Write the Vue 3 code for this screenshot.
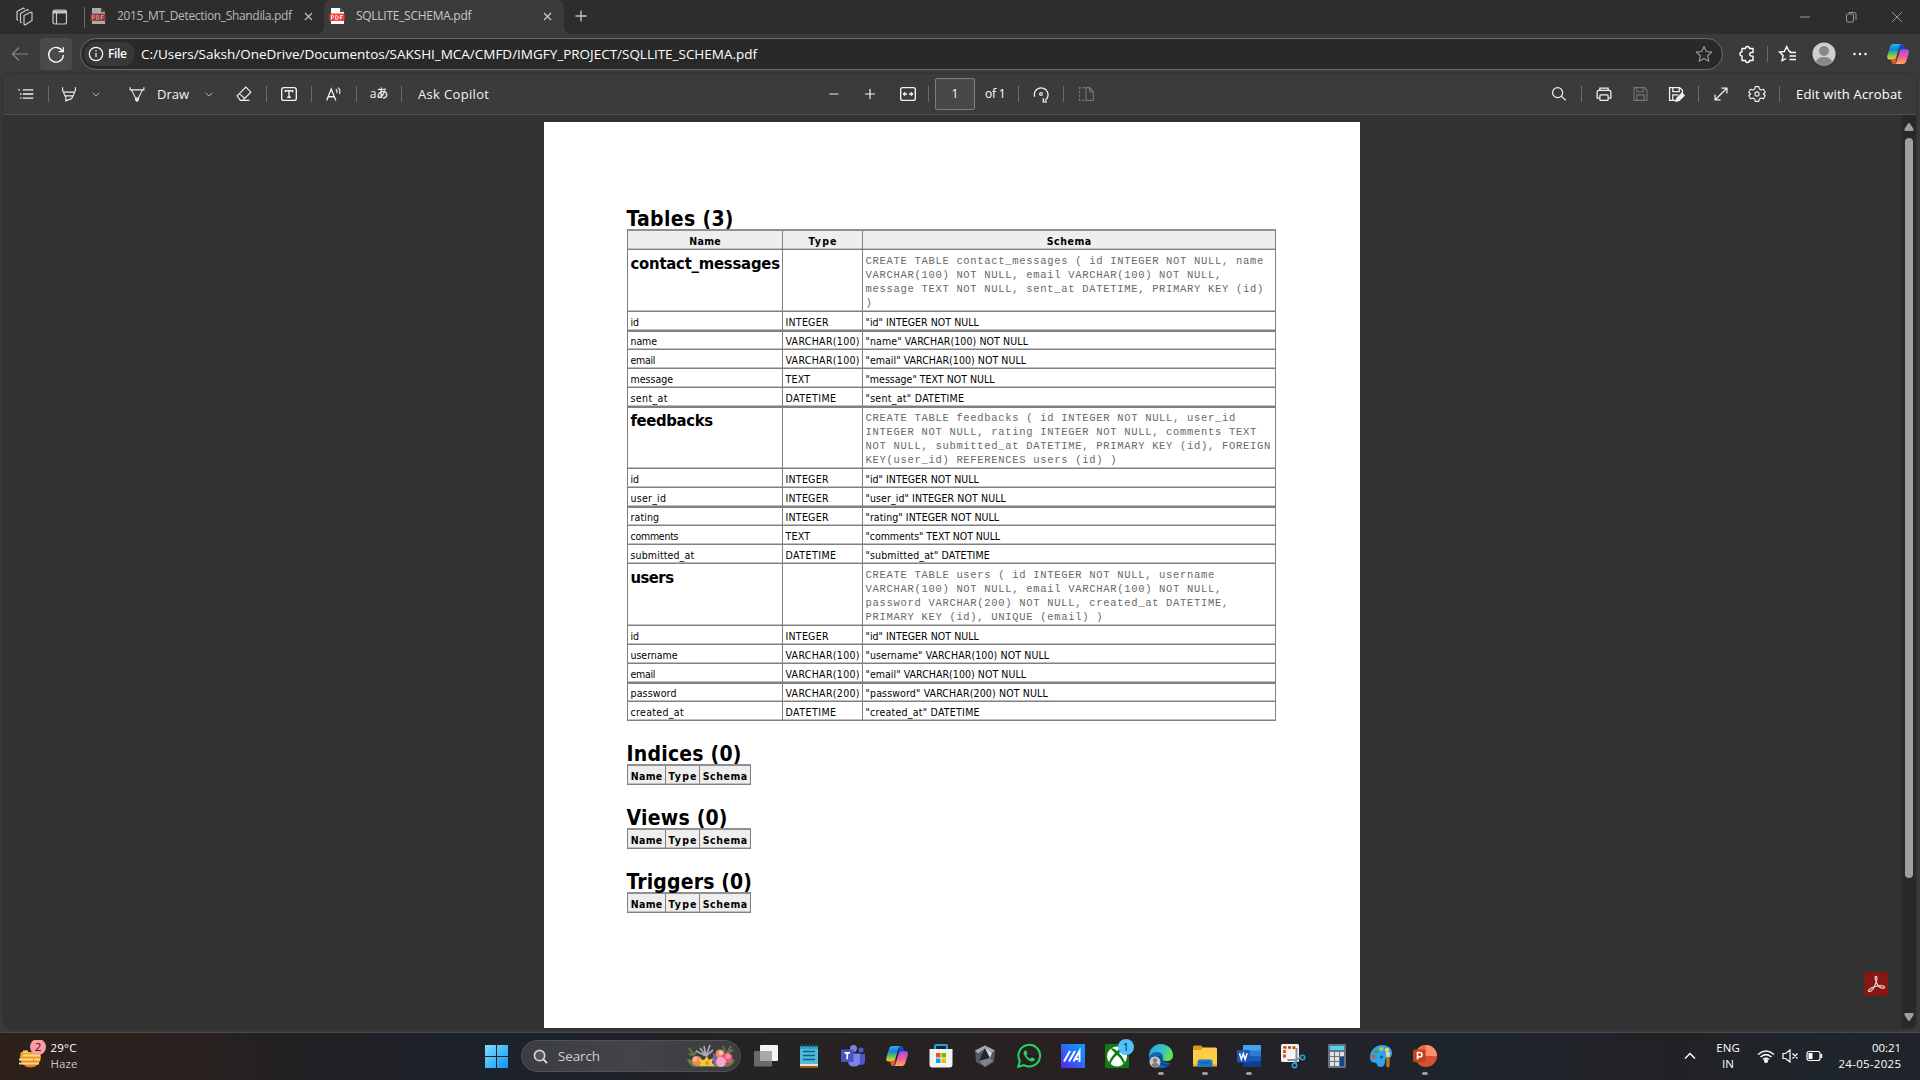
<script setup>
// Letter-spacing is tuned so each label occupies its design width.
const vFit = {
  mounted(el, { value }) {
    if (!value) return
    const natural = el.getBoundingClientRect().width
    const step = (value - natural) / Math.max(1, el.textContent.length - 1)
    el.style.letterSpacing = step.toFixed(3) + 'px'
    el.style.marginRight = (-step).toFixed(3) + 'px'
  },
}

const copilot = `<defs><linearGradient id="cpa" x1="0" y1="0" x2="0" y2="1"><stop offset="0" stop-color="#27b3f5"/><stop offset=".35" stop-color="#1583dc"/><stop offset=".65" stop-color="#5fbf60"/><stop offset="1" stop-color="#ffd21c"/></linearGradient><linearGradient id="cpb" x1="0" y1="0" x2="0" y2="1"><stop offset="0" stop-color="#9a52ee"/><stop offset=".5" stop-color="#f0589b"/><stop offset="1" stop-color="#ffab5a"/></linearGradient></defs><path d="M14 2h2c1.800 0 2.300 1.500 3 4l.5 1.500h-3c-1.800 0-2.500 1-3 2.500z" fill="#1b44c8"/><path d="M7.500 2H16c-1.500 0-2.200 1.200-2.700 3l-2.800 9.500c-.6 2-1.500 3-3.300 3H4c-2.500 0-3.300-1.500-2.600-4L4 5c.6-2 1.600-3 3.500-3z" fill="url(#cpa)"/><path d="M8 22c1.700 0 2.300-1.200 2.800-3l2.700-9c.6-2 1.500-2.800 3.300-2.800h3.400c2.400 0 3.200 1.500 2.500 4L20.300 19c-.7 2-1.700 3-3.600 3z" fill="url(#cpb)"/><path d="M5 17.500h3c1.500 0 2.500-1 3.200-2.500L10 19c-.6 2-1.200 3-2.600 3C5.800 22 5.800 19.500 5 17.500z" fill="#f4572c"/>`

const icons = {
  workspaces: `<path d="M12 11.500l7-3.500 1 .8v7.700L13 21l-1-.8zM9.500 19l-1-1V9.500l7-4 1 1M6 16.500l-1-1V7.500L11.500 4l1 1" stroke-linejoin="round"/>`,
  tabs: `<rect x="5" y="5" width="13.500" height="14" rx="2"/><path d="M5 7h13.500" stroke-width="3"/><path d="M8.500 8v11"/>`,
  back: `<path d="M20 12H4.500M11 5.500L4.500 12l6.500 6.500"/>`,
  reload: `<path d="M19 9a8 8 0 1 0 1 4M20 4.500V9.500h-5" stroke-width="1.400"/>`,
  info: `<circle cx="12" cy="12" r="6.700"/><path d="M12 11v4"/><path d="M12 8.200v1.300" stroke-width="1.400"/>`,
  list: `<path d="M8.500 7.500H20M8.500 12H20M8.500 16.500H20M3.500 7.500h2M5.500 12h1.500M5.500 16.500h1.500" stroke-width="1.500"/>`,
  highlighter: `<path d="M5 4.500v3.500l1 2h12l1-2V4.500M6 10l1.500 4h9L18 10M8.500 14v5.500l6.500-2.500 1-3"/>`,
  chevron: `<path d="M8 10.500l4 4 4-4"/>`,
  pen: `<path d="M4.500 4.500v3h15v-3M6 7.500l6 12 6-12M10.500 16.500h3v2l-1.500 1.500-1.500-1.500z"/>`,
  eraser: `<path d="M4.500 14L14 4.500l5.500 5.500-9 9H8zM7 11.500l6 5.500M10 19h8"/>`,
  textbox: `<rect x="4" y="5" width="16" height="14" rx="2.500" stroke-width="1.500"/><path d="M8 10V8.500h8V10M12 8.500v7M10 15.500h4" stroke-width="1.500"/>`,
  read: `<path d="M4 19L9 6.500 14 19M6 15h6.500" stroke-width="1.400"/><path d="M14 6.500q2 2 1 4.500M16.500 5q3 3 1.500 7"/>`,
  minus: `<path d="M7 12h10" stroke-width="1.600"/>`,
  plus: `<path d="M6.500 12h11M12 6.500v11" stroke-width="1.300"/>`,
  fit: `<rect x="4" y="5" width="16" height="14" rx="2" stroke-width="1.500"/><path d="M7 12h4M13 12h4" stroke-width="1.600"/><path d="M9 9.300v5.400L6 12zM15 9.300v5.400l3-2.700z" fill="currentColor" stroke="none"/>`,
  rotate: `<path d="M5 15a7.500 7.500 0 1 1 11.500 4" stroke-width="1.400"/><path d="M14.500 16.500v4h4" stroke-width="1.400"/><circle cx="12" cy="12" r="1.500"/>`,
  pages: `<path d="M11 5H5v14h6" stroke-dasharray="3 1.500"/><path d="M12 5h4l4 4.500V19h-8zM16 5v4.500h4"/>`,
  search: `<circle cx="10.500" cy="10.500" r="5.500" stroke-width="1.300"/><path d="M14.500 14.500L19.500 19" stroke-width="1.300"/>`,
  print: `<path d="M7.500 8V5.500h9V8M7 16.500H4.500V10q0-2 2-2h11q2 0 2 2v6.500H17" stroke-width="1.400"/><rect x="7.500" y="13" width="9" height="6" rx="1" stroke-width="1.400"/>`,
  save: `<path d="M5.500 5h11l3 3v11h-14zM8.500 5v4.500h7V5M8.500 19v-6h8v6"/>`,
  saveas: `<path d="M12 19H5V5h11l3 3v4M8.500 5v4.500h7V5M8.500 19v-6h6" stroke-width="1.400"/><path d="M12 20l1-3.500 5.500-5.500 2.500 2.500-5.500 5.500z" fill="currentColor"/>`,
  expand: `<path d="M5.500 18.500l13-13M12.500 5.500h6v6M5.500 12.500v6h6" stroke-width="1.300"/>`,
  gear: `<path d="M10 4h4l.6 2.600 1.800 1 2.600-.8 2 3.300-2 1.900 2 1.900-2 3.300-2.600-.8-1.800 1L14 20h-4l-.6-2.600-1.800-1-2.600.8-2-3.300L5 12 3 10.100l2-3.300 2.600.8 1.800-1z" stroke-linejoin="round"/><circle cx="12" cy="12" r="2.300"/>`,
  star: `<path d="M12 4.500l2.300 5 5.400.6-4 3.700 1.100 5.400L12 16.500l-4.800 2.700 1.100-5.400-4-3.700 5.400-.6z" stroke-linejoin="round"/>`,
  puzzle: `<path d="M8 6.500h2.500a2 2 0 0 1 4 0H18v4h-1.500a1.800 1.800 0 0 0 0 3.600H18v4.400h-3.500a2 2 0 0 1-4 0H7v-4.500a2 2 0 0 1 0-4V6.500z" stroke-width="1.400" stroke-linejoin="round"/>`,
  favs: `<path d="M15 9.500l-2-.3-2.300-4.700-2.400 5-4.800.6 3.600 3.500-1 5.100 4-2.200M13.500 10.500H20M13.500 14H20M13.500 17.500H20" stroke-width="1.400"/>`,
  dots: `<g fill="currentColor" stroke="none"><circle cx="6.500" cy="12" r="1.200"/><circle cx="12" cy="12" r="1.200"/><circle cx="17.500" cy="12" r="1.200"/></g>`,
  avatar: `<g stroke="none"><circle cx="12" cy="12" r="11.500" fill="#d2d0ce"/><circle cx="12" cy="9" r="5" fill="#8a8886"/><path d="M4 20q1-5 8-5t8 5a11.500 11.500 0 0 1-16 0z" fill="#8a8886"/></g>`,
  copilot,
  min: `<path d="M7 12h10"/>`,
  restore: `<rect x="7.500" y="9" width="7" height="8" rx="1"/><path d="M9.500 7.500h5.500q2 0 2 2V15"/>`,
  close: `<path d="M7 7l10 10M17 7L7 17"/>`,
  pdf: `<g stroke="none"><path d="M6 4h9l4 4v12H6z" fill="#fff"/><path d="M15 4l4 4h-4z" fill="#444"/><rect x="4.500" y="9.500" width="15" height="7.500" rx="1" fill="#f43e3e"/></g><path d="M6.500 15.500v-4h1.200q1 0 1 1.100t-1 1.100h-1M10.700 11.500v4h.8q1.600 0 1.600-2t-1.600-2zM15.300 15.500v-4h2.400M15.300 13.500h2" stroke="#fff" stroke-width=".9"/>`,
  wifi: `<path d="M4 10.500q8-7 16 0M6.500 13q5.500-4.800 11 0M9 15.500q3-2.500 6 0" stroke-width="1.500"/><circle cx="12" cy="17" r="1.400" fill="currentColor"/>`,
  mute: `<path d="M5 9.500h2.500L12 6v12l-4.500-3.500H5zM14.500 9.500l5 5M19.500 9.500l-5 5" stroke-width="1.200"/>`,
  battery: `<rect x="5" y="7.500" width="13" height="9" rx="2" stroke-width="1.200"/><path d="M6.500 9h4v6h-4zM18.500 10h1.700v4h-1.700z" fill="currentColor" stroke="none"/>`,
  caret: `<path d="M7 14.500l5-5 5 5" stroke-width="1.500"/>`,
}

const leftTools = [
  { icon: 'list', w: 42, after: 1, sep: true },
  { icon: 'highlighter', w: 40, after: 1 },
  { icon: 'chevron', w: 11, dim: true, after: 18 },
  { icon: 'pen', w: 36 },
  { text: 'Draw', w: 48, fit: 32, pad: 2 },
  { icon: 'chevron', w: 12, dim: true, after: 8 },
  { icon: 'eraser', w: 41, after: 2, sep: true },
  { icon: 'textbox', w: 44, sep: true },
  { icon: 'read', w: 44, sep: true },
  { glyph: 'aあ', w: 44, sep: true },
  { text: 'Ask Copilot', w: 88, fit: 71, pad: 16 },
]
const rightTools = [
  { icon: 'search', w: 44, sep: true },
  { icon: 'print', w: 44 },
  { icon: 'save', w: 28, off: true },
  { icon: 'saveas', w: 44, sep: true },
  { icon: 'expand', w: 44 },
  { icon: 'gear', w: 28, after: 8, sep: true },
]

const f = (name, nw, type, decl, w) => ({ name, nw, type, decl: `"${name}" ${decl}`, w })
const typeWidth = { INTEGER: 43, 'VARCHAR(100)': 74, 'VARCHAR(200)': 74, TEXT: 24.5, DATETIME: 50.5 }
const tables = [
  {
    name: 'contact_messages', nw: 149.5, height: 62,
    sql: ['CREATE TABLE contact_messages ( id INTEGER NOT NULL, name', 'VARCHAR(100) NOT NULL, email VARCHAR(100) NOT NULL,', 'message TEXT NOT NULL, sent_at DATETIME, PRIMARY KEY (id)', ')'],
    thick: [0, 4],
    fields: [
      f('id', 8.5, 'INTEGER', 'INTEGER NOT NULL', 113.3),
      f('name', 26.5, 'VARCHAR(100)', 'VARCHAR(100) NOT NULL', 162.4),
      f('email', 25, 'VARCHAR(100)', 'VARCHAR(100) NOT NULL', 160.5),
      f('message', 42.5, 'TEXT', 'TEXT NOT NULL', 129),
      f('sent_at', 37, 'DATETIME', 'DATETIME', 98.5),
    ],
  },
  {
    name: 'feedbacks', nw: 82.5, height: 61,
    sql: ['CREATE TABLE feedbacks ( id INTEGER NOT NULL, user_id', 'INTEGER NOT NULL, rating INTEGER NOT NULL, comments TEXT', 'NOT NULL, submitted_at DATETIME, PRIMARY KEY (id), FOREIGN', 'KEY(user_id) REFERENCES users (id) )'],
    thick: [1],
    fields: [
      f('id', 8.5, 'INTEGER', 'INTEGER NOT NULL', 113.3),
      f('user_id', 35.5, 'INTEGER', 'INTEGER NOT NULL', 140.3),
      f('rating', 28.5, 'INTEGER', 'INTEGER NOT NULL', 133.6),
      f('comments', 48, 'TEXT', 'TEXT NOT NULL', 134.6),
      f('submitted_at', 63.6, 'DATETIME', 'DATETIME', 124.3),
    ],
  },
  {
    name: 'users', nw: 43.5, height: 62,
    sql: ['CREATE TABLE users ( id INTEGER NOT NULL, username', 'VARCHAR(100) NOT NULL, email VARCHAR(100) NOT NULL,', 'password VARCHAR(200) NOT NULL, created_at DATETIME,', 'PRIMARY KEY (id), UNIQUE (email) )'],
    thick: [2],
    fields: [
      f('id', 8.5, 'INTEGER', 'INTEGER NOT NULL', 113.3),
      f('username', 47, 'VARCHAR(100)', 'VARCHAR(100) NOT NULL', 183.6),
      f('email', 25, 'VARCHAR(100)', 'VARCHAR(100) NOT NULL', 160.5),
      f('password', 46, 'VARCHAR(200)', 'VARCHAR(200) NOT NULL', 182.3),
      f('created_at', 53.2, 'DATETIME', 'DATETIME', 114),
    ],
  },
]
const emptySections = [
  { title: 'Indices (0)', w: 115 },
  { title: 'Views (0)', w: 101 },
  { title: 'Triggers (0)', w: 125.5 },
]

const apps = [
  { id: 'taskview', svg: `<rect x="7" y="1" width="18" height="16" rx="1" fill="#f4f4f4"/><rect x="1" y="7" width="18" height="15.500" rx="1" fill="#6f6f6f" opacity=".95"/><path d="M7 7h12v10H7z" fill="#a9a9a9"/>` },
  { id: 'notepad', svg: `<path d="M3 3h18v17H3z" fill="#52bcd8"/><path d="M3 20h18v2H3z" fill="#e9e4dc"/><path d="M3 22h18v2H3z" fill="#a85513"/><path d="M3 2h18v3H3z" fill="#2fa3c4"/><path d="M5.500 0v3M9 0v3M12.500 0v3M16 0v3M19 0v3" stroke="#0b5b78" stroke-width="1.500"/><path d="M6 7.500h12M6 11.500h12M6 15.500h12" stroke="#135e86" stroke-width="1.600"/>` },
  { id: 'teams', svg: `<circle cx="20" cy="6" r="2.600" fill="#5059c9"/><path d="M16 10h8v7q0 4-4 4-3 0-4-2z" fill="#4f58c8"/><circle cx="12.500" cy="4.500" r="3.500" fill="#7b83eb"/><path d="M7 9.500h12v7.500q0 5.500-6 5.500t-6-5.500z" fill="#7b83eb"/><rect x="0" y="5.500" width="12.500" height="12.500" rx="1" fill="#4b53bc"/><path d="M3.500 8.800h5.500M6.250 8.800v6.400" stroke="#fff" stroke-width="1.700"/>` },
  { id: 'copilot', svg: copilot },
  { id: 'store', svg: `<path d="M6 6V2q0-1 1-1h10q1 0 1 1v4" fill="none" stroke="#22a3e6" stroke-width="2"/><path d="M.5 5h23v15.500q0 3-3 3h-17q-3 0-3-3z" fill="#f3f3f3"/><path d="M7 9h4.500v4.500H7z" fill="#f25022"/><path d="M12.500 9H17v4.500h-4.500z" fill="#7fba00"/><path d="M7 14.500h4.500V19H7z" fill="#00a4ef"/><path d="M12.500 14.500H17V19h-4.500z" fill="#ffb900"/>` },
  { id: 'crate', svg: `<path d="M12 1.500l10 5-1 11.500-9 5-9-5-1-11.500z" fill="#525963"/><path d="M12 1.500l10 5-3 2-7-4-7 5-3-3z" fill="#a2a8b1"/><path d="M12 4l5 10-11 3z" fill="#23272e"/><path d="M12 4l5 10 2-5z" fill="#d7dbe0"/><path d="M6 17l11-3 3 3-8 6z" fill="#7b838f"/>` },
  { id: 'whatsapp', svg: `<path d="M1.300 22.700l1.500-5.800a10.800 10.800 0 1 1 4.200 4.200z" fill="#272221" stroke="#25d366" stroke-width="2"/><path d="M8 6.500c-2 1-2 3 0 6s5 5 7 5 3-1.500 2.800-2.800l-3-1.500-1.500 1.700q-3-1.200-4-3.700l1.200-1.500L9.200 6.500z" fill="#25d366"/>` },
  { id: 'armoury', svg: `<defs><linearGradient id="arm" x1="0" y1="1" x2="1" y2="0"><stop offset="0" stop-color="#5a22f5"/><stop offset=".6" stop-color="#2277fb"/><stop offset="1" stop-color="#08a2ff"/></linearGradient></defs><path d="M0 0h24v24H0z" fill="url(#arm)"/><path d="M3 17.500L9 7M8 17.500L14 7M12.500 17.500L18.500 7v11M15 15h2" fill="none" stroke="#fff" stroke-width="2"/>` },
  { id: 'xbox', badge: '1', svg: `<rect width="24" height="24" rx="1" fill="#107c10"/><circle cx="12" cy="12.500" r="10" fill="#fff"/><path d="M5.500 4.500Q9 3.500 12 7q3-3.500 6.500-2.500L14 9q5 5.500 6 9.500l-1.500 2Q17 15 12 11q-5 4-6.500 9.500L4 18.500q1-4 6-9.500z" fill="#107c10"/>` },
  { id: 'edge', open: true, svg: `<defs><linearGradient id="edg" x1="0" y1="0" x2="1" y2=".3"><stop offset="0" stop-color="#2aa8e0"/><stop offset=".6" stop-color="#35c1c8"/><stop offset="1" stop-color="#67e04b"/></linearGradient></defs><circle cx="12" cy="12" r="12" fill="#1267b4"/><path d="M0 11C1 4 6 0 12 0s12 5 12 11c0 4-3 6-6 6s-5-1-4-3-1-6-6-6-8 3-8 7z" fill="url(#edg)"/><path d="M8 13c-1 5 3 9 8 9 3 0 5-1 6.500-3-5 2-10 0-10-5 0-2-3-3-4.500-1z" fill="#0b4a8c"/><path d="M14 14q-1 3 4 3.200 4 0 6-3.500v4l-1.500 1q-8.500 1.300-8.500-4.700z" fill="#272221"/><circle cx="6" cy="18" r="5.500" fill="#c9c7c5"/><circle cx="6" cy="16.500" r="2.200" fill="#807c79"/><path d="M2.500 22q0-3 3.500-3t3.500 3q-3.500 2-7 0z" fill="#807c79"/>` },
  { id: 'files', open: true, svg: `<path d="M0 3q0-1.500 1.500-1.500H8L10.500 4v3H0z" fill="#d99a12"/><path d="M0 6h8l2-2.500h12.500q1.500 0 1.500 1.500v16.500H0z" fill="#fdcb45"/><path d="M0 20h24v2.500H0z" fill="#eeb32c"/><path d="M4.500 22.500V18q0-2.500 2.500-2.500h10q2.500 0 2.500 2.500v4.500z" fill="#1479cf"/><path d="M8 18.700h8" stroke="#0b5aa0" stroke-width="1.200"/>` },
  { id: 'word', open: true, svg: `<path d="M6 1h18v6H6z" fill="#41a5ee"/><path d="M6 6.500h18V12H6z" fill="#2b7cd3"/><path d="M6 12h18v5.500H6z" fill="#185abd"/><path d="M6 17.500h18V23H6z" fill="#103f91"/><rect x="0" y="6" width="12.500" height="12.500" rx="1" fill="#1d55b3"/><path d="M2.500 9.200l1.900 6.200 1.900-5.700 1.900 5.700 1.900-6.200" fill="none" stroke="#fff" stroke-width="1.500"/>` },
  { id: 'snip', svg: `<rect x="0" y="0" width="18" height="18" rx="1.500" fill="#f2f2f2"/><path d="M3.500 13.500v-10H13v3" fill="none" stroke="#d83b01" stroke-width="2.600" stroke-dasharray="3 1.500"/><path d="M15.500 4v12L20 13M15.500 16h-9M15.500 16l-1.500 4" fill="none" stroke="#8a8f94" stroke-width="2"/><circle cx="21.500" cy="13.500" r="2.200" fill="none" stroke="#26a0e8" stroke-width="1.500"/><circle cx="13.500" cy="21.500" r="2.200" fill="none" stroke="#26a0e8" stroke-width="1.500"/>` },
  { id: 'calc', svg: `<rect x="3" y="0" width="18" height="24" rx="1" fill="#64737d"/><path d="M5 2h14v4H5z" fill="#50d2f5"/><path d="M5 8h4v4H5zM10 8h4v4h-4zM15 8h4v4h-4zM5 13h4v4H5zM10 13h4v4h-4zM5 18h4v4H5zM10 18h4v4h-4z" fill="#dde3e6"/><path d="M15 13h4v9h-4z" fill="#10478c"/>` },
  { id: 'paint', svg: `<path d="M1 13C1 6 7 1 13 1c6 0 10 3 10 8 0 4-2 5-4 5-3 0-3 2-3 4 0 3-2 5-5 5-2 0-3-3-4-4s-6 1-6-6z" fill="#2ea5ea"/><circle cx="4.500" cy="12.500" r="2" fill="#e8502e"/><circle cx="7.500" cy="7.500" r="2" fill="#3ca53a"/><circle cx="12.500" cy="5" r="2" fill="#f4b91d"/><circle cx="18" cy="6" r="2" fill="#f7e14a"/><circle cx="12.500" cy="13" r="1.600" fill="#125a93"/><path d="M17 8h4l-.5 5h-3z" fill="#f0d4a3"/><path d="M17.300 13h3.400v9q-1.700 3-3.400 0z" fill="#b87622"/>` },
  { id: 'powerpoint', open: true, svg: `<circle cx="13" cy="12" r="11" fill="#d35230"/><path d="M13 1a11 11 0 0 1 11 11H13z" fill="#ff8f6b"/><path d="M2 12a11 11 0 0 1 11-11v11z" fill="#ed6c47"/><rect x="0" y="5.500" width="12.500" height="12.500" rx="1" fill="#c43e1c"/><path d="M4.500 15.500v-7h2.200q2.300 0 2.300 2.200t-2.300 2.200H4.500" fill="none" stroke="#fff" stroke-width="1.600"/>` },
]
</script>

<template>
  <div class="screen">
    <header class="tabstrip">
      <svg class="ico ws" viewBox="0 0 24 24" v-html="icons.workspaces" />
      <svg class="ico tabsico" viewBox="0 0 24 24" v-html="icons.tabs" />
      <i class="vline tabline" />
      <div class="tab idle">
        <svg class="ico" viewBox="0 0 24 24" v-html="icons.pdf" />
        <span class="tabname"><span v-fit="175" class="t">2015_MT_Detection_Shandila.pdf</span></span>
        <svg class="ico x" viewBox="0 0 24 24" v-html="icons.close" />
      </div>
      <div class="tab active">
        <svg class="ico" viewBox="0 0 24 24" v-html="icons.pdf" />
        <span class="tabname"><span v-fit="115.5" class="t">SQLLITE_SCHEMA.pdf</span></span>
        <svg class="ico x" viewBox="0 0 24 24" v-html="icons.close" />
      </div>
      <svg class="ico newtab" viewBox="0 0 24 24" v-html="icons.plus" />
      <div class="winbtns">
        <svg class="ico" viewBox="0 0 24 24" v-html="icons.min" />
        <svg class="ico" viewBox="0 0 24 24" v-html="icons.restore" />
        <svg class="ico" viewBox="0 0 24 24" v-html="icons.close" />
      </div>
    </header>

    <div class="addressrow">
      <svg class="ico back" viewBox="0 0 24 24" v-html="icons.back" />
      <div class="reload"><svg class="ico" viewBox="0 0 24 24" v-html="icons.reload" /></div>
      <div class="omnibox">
        <div class="chip">
          <svg class="ico" viewBox="0 0 24 24" v-html="icons.info" />
          <span v-fit="19" class="t">File</span>
        </div>
        <span v-fit="616" class="t url">C:/Users/Saksh/OneDrive/Documentos/SAKSHI_MCA/CMFD/IMGFY_PROJECT/SQLLITE_SCHEMA.pdf</span>
        <svg class="ico fav" viewBox="0 0 24 24" v-html="icons.star" />
      </div>
      <svg class="ico puzzle" viewBox="0 0 24 24" v-html="icons.puzzle" />
      <i class="vline" />
      <svg class="ico favs" viewBox="0 0 24 24" v-html="icons.favs" />
      <svg class="ico avatar" viewBox="0 0 24 24" v-html="icons.avatar" />
      <svg class="ico more" viewBox="0 0 24 24" v-html="icons.dots" />
      <svg class="cop" viewBox="0 0 24 24" v-html="icons.copilot" />
    </div>

    <main class="panel">
      <div class="toolbar">
        <div class="group left">
          <template v-for="(tool, i) in leftTools" :key="i">
            <div class="tool" :class="{ dim: tool.dim, label: tool.text }" :style="{ width: tool.w + 'px', paddingLeft: (tool.pad || 0) + 'px', marginRight: (tool.after || 0) + 'px' }">
              <svg v-if="tool.icon" class="ico" viewBox="0 0 24 24" v-html="icons[tool.icon]" />
              <span v-else-if="tool.glyph" class="glyph">{{ tool.glyph }}</span>
              <span v-else v-fit="tool.fit" class="t">{{ tool.text }}</span>
            </div>
            <i v-if="tool.sep" class="vline" />
          </template>
        </div>
        <div class="group middle">
          <div class="tool zoomout"><svg class="ico" viewBox="0 0 24 24" v-html="icons.minus" /></div>
          <div class="tool zoomin"><svg class="ico" viewBox="0 0 24 24" v-html="icons.plus" /></div>
          <div class="tool fitw"><svg class="ico" viewBox="0 0 24 24" v-html="icons.fit" /></div>
          <i class="vline" />
          <div class="pageno">1</div>
          <span class="pagecount"><span v-fit="20.5" class="t">of 1</span></span>
          <i class="vline" />
          <div class="tool wide"><svg class="ico" viewBox="0 0 24 24" v-html="icons.rotate" /></div>
          <i class="vline" />
          <div class="tool wide off"><svg class="ico" viewBox="0 0 24 24" v-html="icons.pages" /></div>
        </div>
        <div class="group right">
          <template v-for="(tool, i) in rightTools" :key="i">
            <div class="tool" :class="{ off: tool.off }" :style="{ width: tool.w + 'px', marginRight: (tool.after || 0) + 'px' }">
              <svg class="ico" viewBox="0 0 24 24" v-html="icons[tool.icon]" />
            </div>
            <i v-if="tool.sep" class="vline" />
          </template>
          <span class="acrobat"><span v-fit="106" class="t">Edit with Acrobat</span></span>
        </div>
      </div>

      <div class="viewer">
        <article class="page">
          <h1><span v-fit="107">Tables (3)</span></h1>
          <div class="grid">
            <div class="row head">
              <div class="c1"><b v-fit="31.5">Name</b></div>
              <div class="c2"><b v-fit="28">Type</b></div>
              <div class="c3"><b v-fit="44.5">Schema</b></div>
            </div>
            <template v-for="table in tables" :key="table.name">
              <div class="row def" :style="{ height: table.height + 'px' }">
                <div class="c1"><h2><span v-fit="table.nw">{{ table.name }}</span></h2></div>
                <div class="c2" />
                <div class="c3 sql"><div v-for="line in table.sql" :key="line">{{ line }}</div></div>
              </div>
              <div v-for="(field, i) in table.fields" :key="field.name" class="row field" :class="{ thick: table.thick.includes(i) }">
                <div class="c1"><span v-fit="field.nw">{{ field.name }}</span></div>
                <div class="c2"><span v-fit="typeWidth[field.type]">{{ field.type }}</span></div>
                <div class="c3"><span v-fit="field.w">{{ field.decl }}</span></div>
              </div>
            </template>
          </div>
          <section v-for="section in emptySections" :key="section.title">
            <h1><span v-fit="section.w">{{ section.title }}</span></h1>
            <div class="grid small">
              <div class="row head">
                <div class="c1"><b v-fit="31.5">Name</b></div>
                <div class="c2"><b v-fit="28">Type</b></div>
                <div class="c3"><b v-fit="44.5">Schema</b></div>
              </div>
            </div>
          </section>
        </article>
        <div class="acrobadge">
          <svg viewBox="0 0 24 24"><path d="M11.500 4.500c2-.8 1.800 3 0 7.500s-4.500 7.800-6.500 7.500 1.500-4 6-5 9-1 9.500.5-3.500 2-6-1-4-8.700-3-9.500z" fill="none" stroke="#e6cfcd" stroke-width="1.200" /></svg>
        </div>
        <div class="scrollbar">
          <svg viewBox="0 0 10 8"><path d="M5 0Q5.800 0 6.300 1L9.500 6Q10 8 8.500 8h-7Q0 8 .5 6L3.700 1Q4.200 0 5 0z" fill="#9f9f9f" /></svg>
          <div class="thumb" />
          <svg class="down" viewBox="0 0 10 8"><path d="M5 0Q5.800 0 6.300 1L9.500 6Q10 8 8.500 8h-7Q0 8 .5 6L3.700 1Q4.200 0 5 0z" fill="#9f9f9f" /></svg>
        </div>
      </div>
    </main>

    <footer class="taskbar">
      <div class="weather">
        <svg viewBox="0 0 28 30">
          <defs><linearGradient id="sun" x1="0" y1="0" x2="0" y2="1"><stop offset="0" stop-color="#f8c02c" /><stop offset="1" stop-color="#f0751b" /></linearGradient></defs>
          <circle cx="12.500" cy="17" r="10.500" fill="url(#sun)" />
          <path d="M0 6h18v6H0z" fill="#2a201e" />
          <path d="M5 11.500h5M5 15.500h17M1 19.500h14M16 19.500h6M1 23.500h20" stroke="#f4dc8c" stroke-width="2" />
          <circle cx="20" cy="7" r="8" fill="#ff99a4" />
          <text x="20" y="11" text-anchor="middle" font-family="Noto Sans, sans-serif" font-size="11.500" fill="#3a1a1d">2</text>
        </svg>
        <div class="wtext"><span v-fit="26" class="t">29°C</span><span v-fit="27" class="t haze">Haze</span></div>
      </div>
      <svg class="start" viewBox="0 0 23 23">
        <defs><linearGradient id="win" x1="0" y1="0" x2="1" y2="1"><stop offset="0" stop-color="#85dcfd" /><stop offset="1" stop-color="#0a97f5" /></linearGradient></defs>
        <path d="M0 0h11v11H0zM12 0h11v11H12zM0 12h11v11H0zM12 12h11v11H12z" fill="url(#win)" />
      </svg>
      <div class="searchbox">
        <svg class="lens" viewBox="0 0 16 16"><circle cx="7" cy="7" r="5.500" fill="#55575c" stroke="#d8d8d8" stroke-width="1.700" /><path d="M11 11l4 4" stroke="#d8d8d8" stroke-width="2" /></svg>
        <span v-fit="42" class="t">Search</span>
        <svg class="flowers" viewBox="0 0 48 24">
          <path d="M0 15q3 9 10 8h28q8 0 10-8-5 1-7 5H8q-2-5-8-5z" fill="#63813b" />
          <path d="M7 11L2 4M7 11l3-5M7 11l-5-1M40 9l4-7M40 9l6-3M38 8l-2-6" stroke="#5f7a44" stroke-width="2" />
          <path d="M19 12L9 7M19 12l-6-8M19 12l-2-10M19 12l4-11M19 12l7-6" stroke="#a9abb0" stroke-width="1.700" />
          <circle cx="10" cy="17" r="5" fill="#ee8d5b" /><circle cx="8" cy="15" r="2.500" fill="#f9b28a" />
          <circle cx="33" cy="10" r="4.500" fill="#f08b62" /><circle cx="34" cy="9" r="2.200" fill="#ffc29e" />
          <path d="M26 9l4 3 1 9h-5z" fill="#7a61b2" />
          <circle cx="40" cy="14" r="5.500" fill="#e8577f" /><circle cx="34" cy="18" r="5" fill="#f4a5c8" /><circle cx="41" cy="12.500" r="2.500" fill="#f794b0" />
          <path d="M20 12l2 4 4-2-1 5 3 3H12l2-3-2-4 5 1z" fill="#f5c838" /><circle cx="20" cy="19" r="2" fill="#d99b1d" />
        </svg>
      </div>
      <div class="apps">
        <div v-for="app in apps" :key="app.id" class="app">
          <svg viewBox="0 0 24 24" v-html="app.svg" />
          <i v-if="app.open" class="running" />
          <span v-if="app.badge" class="badge">{{ app.badge }}</span>
        </div>
      </div>
      <svg class="ico caret" viewBox="0 0 24 24" v-html="icons.caret" />
      <div class="lang"><span v-fit="23.5" class="t">ENG</span><span v-fit="12" class="t">IN</span></div>
      <div class="status">
        <svg class="ico" viewBox="0 0 24 24" v-html="icons.wifi" />
        <svg class="ico" viewBox="0 0 24 24" v-html="icons.mute" />
        <svg class="ico" viewBox="0 0 24 24" v-html="icons.battery" />
      </div>
      <div class="clock"><span v-fit="29" class="t">00:21</span><span v-fit="62.500" class="t">24-05-2025</span></div>
    </footer>
  </div>
</template>

<style>
html, body { margin: 0; background: #3b3b3b; overflow: hidden; }
</style>

<style scoped>
* { box-sizing: border-box; }
.screen { width: 1920px; height: 1080px; display: flex; flex-direction: column; background: #3b3b3b; color: #fff; font: 12px/16px "Open Sans", "Noto Sans", sans-serif; overflow: hidden; }
.t, h1 span, h2 span, .row span, .row b { display: inline-block; white-space: nowrap; }
.ico { width: 24px; height: 24px; fill: none; stroke: currentColor; stroke-width: 1.2; flex: none; display: block; }
.vline { width: 1px; height: 16px; background: #6a6a6a; flex: none; }

.tabstrip { height: 34px; background: #2d2d2d; display: flex; align-items: center; color: #c8c8c8; flex: none; }
.ws { margin-left: 12px; margin-top: -2px; }
.tabsico { margin: -1px 0 0 12px; }
.tabline { margin-left: 12px; height: 21px; margin-right: 1px; }
.tab { display: flex; align-items: center; height: 34px; }
.tab .ico { margin-top: -2px; }
.tab.idle { width: 237px; color: #b9b9b9; }
.tab.idle .ico:first-child { opacity: .6; }
.tabname { margin-top: -2px; margin-left: 7px; flex: 1; }
.tab.active { width: 240px; background: #3b3b3b; border-radius: 8px 8px 0 0; padding-left: 1px; position: relative; margin-left: 1px; }
.tab.active::before, .tab.active::after { content: ""; position: absolute; bottom: 0; width: 7px; height: 7px; }
.tab.active::before { left: -7px; background: radial-gradient(circle at 0 0, #2d2d2d 6.5px, #3b3b3b 7px); }
.tab.active::after { right: -7px; background: radial-gradient(circle at 100% 0, #2d2d2d 6.5px, #3b3b3b 7px); }
.tab .x { width: 17px; height: 17px; stroke-width: 1.7; }
.tab.idle .x { margin-right: 6px; }
.tab.active .x { margin-right: 8px; }
.newtab { margin: -2px 0 0 5px; }
.winbtns { margin-left: auto; margin-right: 11px; display: flex; gap: 22px; color: #979797; }
.winbtns .ico { stroke-width: 1; }

.addressrow { height: 39px; display: flex; align-items: center; padding-top: 1px; flex: none; }
.back { color: #858585; margin-left: 8px; }
.reload { width: 32px; height: 32px; margin-left: 8px; border-radius: 4px; background: #4a4a4a; display: flex; align-items: center; justify-content: center; flex: none; }
.reload .ico { width: 22px; height: 22px; }
.omnibox { width: 1643px; height: 32px; margin-left: 8px; border: 1px solid #6b6b6b; border-radius: 16px; background: #292929; display: flex; align-items: center; padding-left: 3px; flex: none; }
.chip { width: 51px; height: 24px; border-radius: 12px; background: #383838; display: flex; align-items: center; font-weight: 600; font-size: 12px; flex: none; }
.url { font-size: 13.5px; line-height: 20px; margin-left: 6px; }
.fav { margin-left: auto; margin-right: 6px; color: #979797; }
.puzzle { margin-left: 12px; margin-right: 8px; }
.favs { margin-left: 8px; }
.avatar { margin-left: 12px; }
.more { margin-left: 12px; }
.cop { width: 24px; height: 24px; margin-left: 14px; flex: none; }

.panel { width: 1913px; height: 955px; margin-left: 3px; margin-top: 1px; border-radius: 8px; overflow: hidden; display: flex; flex-direction: column; box-shadow: 0 0 3px rgba(0, 0, 0, .35); flex: none; }
.toolbar { height: 41px; background: #3b3b3b; border-bottom: 1px solid #515151; display: flex; align-items: center; flex: none; font-size: 13px; }
.group { display: flex; align-items: center; height: 40px; }
.group.left { margin-left: 2px; width: 800px; }
.group.middle { width: 420px; margin-left: 11px; }
.group.right { margin-left: auto; padding-right: 14px; }
.tool { height: 32px; display: flex; align-items: center; justify-content: center; color: #f2f2f2; flex: none; }
.tool.label { justify-content: flex-start; }
.tool .ico { width: 22px; height: 22px; }
.tool.dim { color: #b5b5b5; }
.tool.dim .ico { width: 20px; height: 20px; }
.tool.off { color: #767676; }
.glyph { font: 500 12px/18px "Open Sans", "Noto Sans CJK JP", sans-serif; letter-spacing: -.2px; }
.zoomout { width: 36px; color: #b0b0b0; }
.zoomin { width: 36px; }
.fitw { width: 40px; }
.pageno { width: 40px; height: 32px; margin-left: 6px; border: 1px solid #7e7e7e; border-radius: 2px; background: #484848; display: flex; align-items: center; justify-content: center; font-size: 12px; }
.pagecount { width: 43px; padding-left: 10px; font-size: 12px; }
.tool.wide { width: 44px; }
.acrobat { padding-left: 16px; }

.viewer { flex: 1; background: #323232; display: flex; position: relative; }
.page { width: 816px; height: 906px; margin: 7px 0 0 541px; background: #fff; color: #000; padding: 85px 0 0 83px; font-family: "DejaVu Sans Condensed", "DejaVu Sans", sans-serif; font-stretch: condensed; font-size: 10.5px; flex: none; }
h1 { margin: 0 0 0 -.5px; height: 22px; font-size: 21px; line-height: 24px; font-weight: 700; }
section { height: 64px; }
.grid { width: 649px; border-left: 1px solid #808080; border-top: 2px solid #909090; margin-bottom: 21px; }
.row { display: flex; height: 19px; border-bottom: 1px solid #808080; box-shadow: inset 0 -1px #c0c0c0; line-height: 18px; }
.row.thick { height: 20px; border-bottom-width: 2px; }
.row.thick + .row.field { height: 18px; }
.row > div { border-right: 1px solid #808080; padding: 1px 0 0 2.5px; white-space: nowrap; }
.row.thick + .row > div { padding-top: 0; }
.row.head { background: #eee; }
.row.head > div { padding: 1px 0 0; text-align: center; font-size: 10.5px; }
.row.def > div { padding-top: 2px; }
.row.thick + .row.def > div { padding-top: 1px; }
.c1 { width: 155px; }
.c2 { width: 80px; }
.c3 { width: 413px; }
.small { width: 124px; }
.small .c1 { width: 38px; }
.small .c2 { width: 34px; }
.small .c3 { width: 51px; }
h2 { margin: 0; font-size: 16.5px; line-height: 24px; }
.row.def > .sql { padding-top: 5px; font: 10.5px/13.9px "Liberation Mono", monospace; letter-spacing: .69px; color: #686868; white-space: pre; }
.row.thick + .row.def > .sql { padding-top: 4px; }

.acrobadge { position: absolute; right: 28px; bottom: 33px; width: 24px; height: 24px; border-radius: 3px; background: #851813; }
.acrobadge svg { display: block; width: 24px; height: 24px; }
.scrollbar { width: 15px; margin-left: auto; background: #292929; display: flex; flex-direction: column; align-items: center; padding: 8px 0; }
.scrollbar svg { width: 10px; height: 8px; flex: none; }
.thumb { width: 8px; height: 740px; border-radius: 4px; background: #9f9f9f; margin-top: 7px; }
.scrollbar .down { margin-top: auto; transform: rotate(180deg); }

.taskbar { margin-top: 3px; height: 48px; border-top: 1px solid #474747; padding-bottom: 1px; display: flex; align-items: center; flex: none; background: linear-gradient(90deg, #2d201d 0, #29211f 180px, #232124 300px, #1c222b 480px, #1f2228 620px, #262323 800px, #282121 1050px, #232227 1250px, #1e242c 1450px, #222226 1680px, #1e252b 1820px, #20242a 1920px); }
.weather { width: 485px; display: flex; align-items: center; flex: none; }
.weather svg { width: 28px; height: 30px; margin-left: 18px; margin-top: -3px; }
.wtext { margin-left: 4.5px; margin-top: -1px; display: flex; flex-direction: column; align-items: flex-start; font-size: 11.5px; }
.haze { color: #c8c8c8; }
.start { width: 23px; height: 23px; flex: none; }
.searchbox { width: 220px; height: 32px; margin-left: 13px; border: 1px solid #505257; border-radius: 16px; background: linear-gradient(90deg, #3b3d43, #434449 50%, #3c3b3d); display: flex; align-items: center; padding-left: 11px; font-size: 13.5px; color: #d0d0d0; flex: none; }
.searchbox .t { margin-top: -1px; }
.lens { width: 15px; height: 15px; margin-right: 10px; }
.flowers { width: 48px; height: 24px; margin-left: auto; margin-right: 5px; }
.apps { display: flex; margin-left: 2px; }
.app { width: 44px; height: 46px; display: flex; align-items: center; justify-content: center; position: relative; }
.app svg { width: 24px; height: 24px; overflow: visible; }
.running { position: absolute; left: 19px; bottom: 4px; width: 6px; height: 3px; border-radius: 2px; background: #9c9b9c; }
.badge { position: absolute; left: 23px; top: 6px; width: 16px; height: 16px; border-radius: 50%; background: #4cc2ff; color: #10222d; text-align: center; font-size: 11px; line-height: 16px; }
.caret { margin-left: 231px; }
.lang { width: 36px; margin-left: 8px; display: flex; flex-direction: column; align-items: center; font-size: 11.5px; }
.status { display: flex; margin-left: 8px; }
.clock { margin-left: auto; margin-right: 19px; display: flex; flex-direction: column; align-items: flex-end; font-size: 11.5px; }
</style>
